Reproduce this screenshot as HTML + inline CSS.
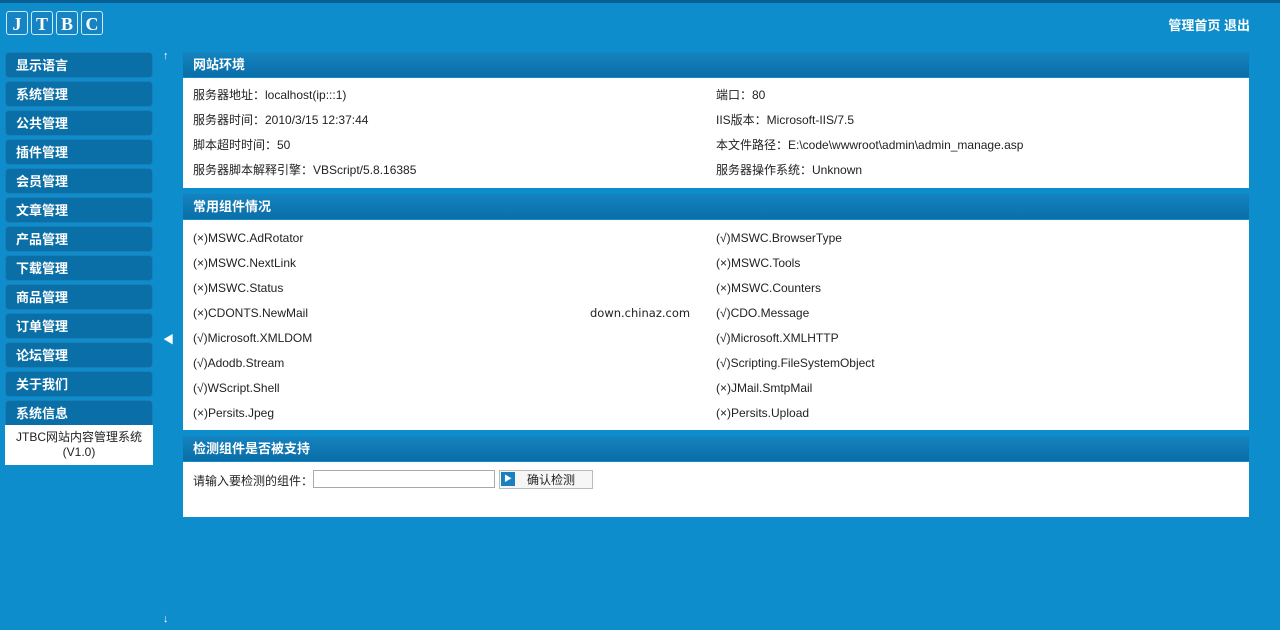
<!DOCTYPE html><html><head><meta charset="utf-8"><style>
body{margin:0;width:1280px;height:630px;background:#0d8dcc;font-family:"Liberation Sans","Noto Sans CJK SC",sans-serif;font-size:12px;position:relative;overflow:hidden}
.top{position:absolute;left:0;top:0;width:1280px;height:3px;background:#0a5f92}
.logo{position:absolute;left:6px;top:11px;display:flex;gap:3px}
.logo span{width:20px;height:22px;border:1px solid #cfe8f5;border-radius:3px;color:#fff;font:bold 18px "Liberation Serif",serif;text-align:center;line-height:24px;background:#1684c2}
.tr{position:absolute;right:30px;top:15px;color:#fff;font-weight:bold;font-size:13px}
.m{position:absolute;left:5px;width:148px;height:26px;background:#0a6ea7;border:1px solid #1a7fb8;border-radius:4px;box-sizing:border-box;color:#fff;font-weight:bold;font-size:13px;line-height:26px;padding-left:10px}
.info{position:absolute;left:5px;top:425px;width:148px;height:40px;background:#fff;text-align:center;font-size:12px;line-height:15px;padding-top:5px;box-sizing:border-box;color:#222}
.h{position:absolute;left:183px;width:1066px;height:25px;background:linear-gradient(#1483bf,#0a6ea8);color:#fff;font-weight:bold;font-size:13px;line-height:25px;padding-left:10px;box-sizing:border-box}
.b{position:absolute;left:183px;width:1066px;background:#fff}
.r{position:absolute;color:#222;font-size:12px;line-height:14px}
.ar{position:absolute;left:163px;color:#fff;font-size:11px}
</style></head><body>
<div class="top"></div>
<div class="logo"><span>J</span><span>T</span><span>B</span><span>C</span></div>
<div class="tr">管理首页 退出</div>
<div class="m" style="top:52px">显示语言</div>
<div class="m" style="top:81px">系统管理</div>
<div class="m" style="top:110px">公共管理</div>
<div class="m" style="top:139px">插件管理</div>
<div class="m" style="top:168px">会员管理</div>
<div class="m" style="top:197px">文章管理</div>
<div class="m" style="top:226px">产品管理</div>
<div class="m" style="top:255px">下载管理</div>
<div class="m" style="top:284px">商品管理</div>
<div class="m" style="top:313px">订单管理</div>
<div class="m" style="top:342px">论坛管理</div>
<div class="m" style="top:371px">关于我们</div>
<div class="m" style="top:400px;border-radius:4px 4px 0 0">系统信息</div>
<div class="info">JTBC网站内容管理系统<br>(V1.0)</div>
<div class="ar" style="top:50px">↑</div>
<div class="ar" style="top:331px">◀</div>
<div class="ar" style="top:613px">↓</div>

<div class="h" style="top:52px">网站环境</div>
<div class="b" style="top:78px;height:110px"></div>
<div class="r" style="left:193px;top:88px">服务器地址：localhost(ip:::1)</div>
<div class="r" style="left:716px;top:88px">端口：80</div>
<div class="r" style="left:193px;top:113px">服务器时间：2010/3/15 12:37:44</div>
<div class="r" style="left:716px;top:113px">IIS版本：Microsoft-IIS/7.5</div>
<div class="r" style="left:193px;top:138px">脚本超时时间：50</div>
<div class="r" style="left:716px;top:138px">本文件路径：E:\code\wwwroot\admin\admin_manage.asp</div>
<div class="r" style="left:193px;top:163px">服务器脚本解释引擎：VBScript/5.8.16385</div>
<div class="r" style="left:716px;top:163px">服务器操作系统：Unknown</div>

<div class="h" style="top:194px">常用组件情况</div>
<div class="b" style="top:220px;height:210px"></div>
<div class="r" style="left:193px;top:231px">(×)MSWC.AdRotator</div>
<div class="r" style="left:716px;top:231px">(√)MSWC.BrowserType</div>
<div class="r" style="left:193px;top:256px">(×)MSWC.NextLink</div>
<div class="r" style="left:716px;top:256px">(×)MSWC.Tools</div>
<div class="r" style="left:193px;top:281px">(×)MSWC.Status</div>
<div class="r" style="left:716px;top:281px">(×)MSWC.Counters</div>
<div class="r" style="left:193px;top:306px">(×)CDONTS.NewMail</div>
<div class="r" style="left:590px;top:306px;font-family:'DejaVu Sans',sans-serif;font-size:11.5px">down.chinaz.com</div>
<div class="r" style="left:716px;top:306px">(√)CDO.Message</div>
<div class="r" style="left:193px;top:331px">(√)Microsoft.XMLDOM</div>
<div class="r" style="left:716px;top:331px">(√)Microsoft.XMLHTTP</div>
<div class="r" style="left:193px;top:356px">(√)Adodb.Stream</div>
<div class="r" style="left:716px;top:356px">(√)Scripting.FileSystemObject</div>
<div class="r" style="left:193px;top:381px">(√)WScript.Shell</div>
<div class="r" style="left:716px;top:381px">(×)JMail.SmtpMail</div>
<div class="r" style="left:193px;top:406px">(×)Persits.Jpeg</div>
<div class="r" style="left:716px;top:406px">(×)Persits.Upload</div>

<div class="h" style="top:436px">检测组件是否被支持</div>
<div class="b" style="top:462px;height:55px"></div>
<div class="r" style="left:193px;top:474px">请输入要检测的组件：</div>
<div style="position:absolute;left:313px;top:470px;width:182px;height:18px;border:1px solid #aaa;box-sizing:border-box;background:#fff"></div>
<div style="position:absolute;left:499px;top:470px;width:94px;height:19px;border:1px solid #bbb;box-sizing:border-box;background:#f6f6f6"></div>
<div style="position:absolute;left:501px;top:472px;width:14px;height:14px;background:#1a7fc0;color:#fff;font-size:8px;line-height:14px;text-align:center">▶</div>
<div class="r" style="left:527px;top:473px">确认检测</div>
</body></html>
